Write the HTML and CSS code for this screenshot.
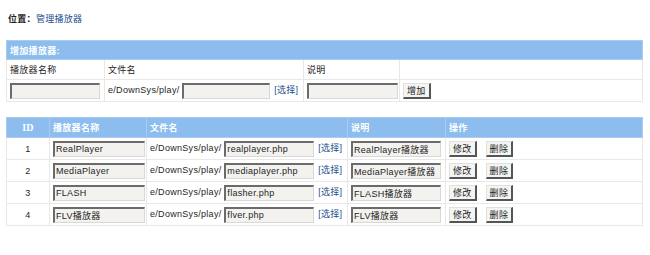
FILE: index.html
```html
<!DOCTYPE html>
<html>
<head>
<meta charset="utf-8">
<link rel="stylesheet" href="styles.css">
</head>
<body>
<div class="crumb"><b>位置：</b><a class="link">管理播放器</a></div>

<table class="grid add">
  <colgroup>
    <col class="a1"><col class="a2"><col class="a3"><col>
  </colgroup>
  <tr class="head"><td colspan="4">增加播放器:</td></tr>
  <tr class="labels">
    <td>播放器名称</td>
    <td>文件名</td>
    <td>说明</td>
    <td></td>
  </tr>
  <tr class="form">
    <td><input class="inp w90" type="text"></td>
    <td>e/DownSys/play/ <input class="inp w88" type="text"> <a class="link sel">[选择]</a></td>
    <td><input class="inp w91" type="text"></td>
    <td><button class="btn">增加</button></td>
  </tr>
</table>

<table class="grid list">
  <colgroup>
    <col class="k1"><col class="k2"><col class="k3"><col class="k4"><col>
  </colgroup>
  <tr class="head">
    <td class="center id">ID</td>
    <td>播放器名称</td>
    <td>文件名</td>
    <td>说明</td>
    <td>操作</td>
  </tr>
  <tr>
    <td class="center">1</td>
    <td><input class="inp w92" type="text" value="RealPlayer"></td>
    <td>e/DownSys/play/ <input class="inp w90" type="text" value="realplayer.php"> <a class="link sel">[选择]</a></td>
    <td><input class="inp w90" type="text" value="RealPlayer播放器"></td>
    <td><button class="btn">修改</button><button class="btn gap">删除</button></td>
  </tr>
  <tr>
    <td class="center">2</td>
    <td><input class="inp w92" type="text" value="MediaPlayer"></td>
    <td>e/DownSys/play/ <input class="inp w90" type="text" value="mediaplayer.php"> <a class="link sel">[选择]</a></td>
    <td><input class="inp w90" type="text" value="MediaPlayer播放器"></td>
    <td><button class="btn">修改</button><button class="btn gap">删除</button></td>
  </tr>
  <tr>
    <td class="center">3</td>
    <td><input class="inp w92" type="text" value="FLASH"></td>
    <td>e/DownSys/play/ <input class="inp w90" type="text" value="flasher.php"> <a class="link sel">[选择]</a></td>
    <td><input class="inp w90" type="text" value="FLASH播放器"></td>
    <td><button class="btn">修改</button><button class="btn gap">删除</button></td>
  </tr>
  <tr>
    <td class="center">4</td>
    <td><input class="inp w92" type="text" value="FLV播放器"></td>
    <td>e/DownSys/play/ <input class="inp w90" type="text" value="flver.php"> <a class="link sel">[选择]</a></td>
    <td><input class="inp w90" type="text" value="FLV播放器"></td>
    <td><button class="btn">修改</button><button class="btn gap">删除</button></td>
  </tr>
</table>
</body>
</html>
```

FILE: styles.css
```css
html, body {
  margin: 0;
  padding: 0;
  background: #ffffff;
}
body {
  font-family: "Liberation Sans", "Noto Sans CJK SC", sans-serif;
  font-size: 9px;
  letter-spacing: 0.3px;
  color: #1e1e1e;
}
.crumb {
  padding: 13px 0 0 8px;
  height: 14px;
  line-height: 12px;
}
.crumb b {
  font-weight: bold;
  color: #1e1e1e;
}
.link {
  color: #1c4f8e;
  text-decoration: none;
}
.grid {
  border-collapse: collapse;
  margin-left: 6px;
  width: 637px;
  border: 1px solid #a9c9ea;
  table-layout: fixed;
}
.grid td {
  border: 1px solid #e8e8e8;
  padding: 0 0 0 3px;
  white-space: nowrap;
  vertical-align: middle;
  overflow: hidden;
}
.grid .head td {
  background: #8cbdee;
  color: #ffffff;
  font-weight: bold;
  border-color: #a9cbf0;
  height: 18px;
}
.add {
  margin-top: 13px;
}
.add .labels td {
  height: 19px;
}
.add .form td {
  height: 21px;
}
.a1 { width: 98px; }
.a2 { width: 199px; }
.a3 { width: 96px; }
.list {
  margin-top: 15px;
}
.list td {
  height: 21px;
}
.list .head td {
  height: 19px;
}
.grid .head td.id {
  font-family: "Liberation Serif", serif;
  font-size: 10px;
}
.k1 { width: 43px; }
.k2 { width: 97px; }
.k3 { width: 201px; }
.k4 { width: 98px; }
.center {
  text-align: center;
}
.grid td.center {
  padding-left: 0;
}
.inp {
  box-sizing: border-box;
  height: 16px;
  margin: 0;
  padding: 0 0 0 1px;
  font: 9px "Liberation Sans", "Noto Sans CJK SC", sans-serif;
  letter-spacing: 0.3px;
  color: #1e1e1e;
  background: #f3f2ef;
  border-style: solid;
  border-width: 2px 1px 1px 2px;
  border-color: #6b6b6b #d8d8d8 #d8d8d8 #6b6b6b;
  vertical-align: middle;
}
.w88 { width: 88px; }
.w90 { width: 90px; }
.w91 { width: 91px; }
.w92 { width: 92px; }
.sel {
  margin-left: 1px;
}
.btn {
  box-sizing: border-box;
  height: 16px;
  padding: 0 3px;
  margin: 0;
  font: 9px "Liberation Sans", "Noto Sans CJK SC", sans-serif;
  letter-spacing: 0.3px;
  color: #1e1e1e;
  background: #f4f4f2;
  border-style: solid;
  border-width: 1px 2px 2px 1px;
  border-color: #e0e0e0 #555555 #555555 #e0e0e0;
  vertical-align: middle;
}
.gap {
  margin-left: 9px;
}
```
